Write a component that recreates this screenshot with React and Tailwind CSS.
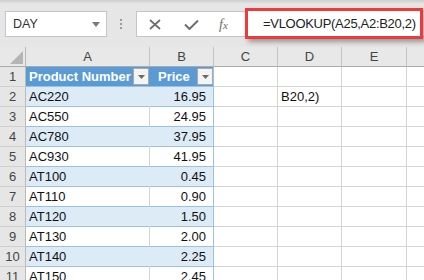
import React from "react";

const rows = [
  ["AC220", "16.95"],
  ["AC550", "24.95"],
  ["AC780", "37.95"],
  ["AC930", "41.95"],
  ["AT100", "0.45"],
  ["AT110", "0.90"],
  ["AT120", "1.50"],
  ["AT130", "2.00"],
  ["AT140", "2.25"],
  ["AT150", "2.45"],
];

const font = "font-['Liberation_Sans',Arial,sans-serif]";

function FilterButton() {
  return (
    <div className="flex h-[17px] w-[16px] shrink-0 items-center justify-center border border-[#a9a9a9] bg-[#f4f4f4]">
      <svg width="7" height="4" viewBox="0 0 7 4">
        <polygon points="0,0 7,0 3.5,4" fill="#6b6b6b" />
      </svg>
    </div>
  );
}

function RowHead({ n }) {
  return (
    <div className="flex h-[20px] w-[26px] shrink-0 items-center justify-center border-r border-b border-r-[#b9b9b9] border-b-[#cfcfcf] bg-[#e6e6e6] text-[13px] text-[#444]">
      {n}
    </div>
  );
}

function EmptyCells({ d }) {
  return (
    <>
      <div className="h-[20px] w-[64px] shrink-0 border-r border-b border-[#d4d4d4] bg-white" />
      <div className="flex h-[20px] w-[64px] shrink-0 items-center border-r border-b border-[#d4d4d4] bg-white pl-[3px] text-[13px] text-[#111]">
        {d}
      </div>
      <div className="h-[20px] w-[65px] shrink-0 border-r border-b border-[#d4d4d4] bg-white" />
      <div className="h-[20px] flex-1 border-b border-[#d4d4d4] bg-white" />
    </>
  );
}

export default function App() {
  return (
    <div className={`relative h-[280px] w-[424px] overflow-hidden bg-white ${font}`}>
      {/* formula bar */}
      <div className="relative h-[47px] bg-[#e6e6e6]">
        <div className="h-[4px] bg-gradient-to-b from-[#cdcdcd] to-[#e6e6e6]" />
        <div className="flex items-start pl-[5px] pt-[7px]">
          <div className="flex h-[26px] w-[102px] shrink-0 items-center justify-between border border-[#c6c6c6] bg-white pl-[7px] pr-[6px]">
            <span className="text-[12.5px] text-[#333]">DAY</span>
            <svg width="8" height="5" viewBox="0 0 8 5">
              <polygon points="0,0 8,0 4,5" fill="#7a7a7a" />
            </svg>
          </div>
          <div className="ml-[13px] flex w-[2px] flex-col gap-[2px] pt-[8px]">
            <span className="h-[2px] w-[2px] bg-[#9c9c9c]" />
            <span className="h-[2px] w-[2px] bg-[#9c9c9c]" />
            <span className="h-[2px] w-[2px] bg-[#9c9c9c]" />
          </div>
          <div className="ml-[14px] -mr-[4px] flex h-[26px] flex-1 items-center border border-[#c6c6c6] bg-white">
            <svg className="ml-[12px]" width="12" height="11" viewBox="0 0 12 11">
              <path d="M1 1 L11 10 M11 1 L1 10" stroke="#6e6e6e" strokeWidth="1.7" />
            </svg>
            <svg className="ml-[23px]" width="15" height="11" viewBox="0 0 15 11">
              <path d="M1 5.5 L5.5 10 L14 1.5" stroke="#6e6e6e" strokeWidth="2" fill="none" />
            </svg>
            <span className="ml-[20px] font-['Liberation_Serif',serif] text-[14px] italic text-[#6e6e6e]">
              f<span className="text-[11px]">x</span>
            </span>
          </div>
        </div>
        {/* highlighted formula */}
        <div className="absolute left-[245px] top-[8px] flex h-[31px] w-[178px] items-center border-[3px] border-[#ee3a3c] bg-white pl-[15px] shadow-[3px_3px_5px_rgba(0,0,0,0.35)]">
          <span className="text-[13px] tracking-[-0.3px] text-[#222]">=VLOOKUP(A25,A2:B20,2)</span>
        </div>
      </div>

      {/* column headers */}
      <div className="flex h-[20px] bg-[#e8e8e8] text-[13px] text-[#444]">
        <div className="relative h-[20px] w-[26px] shrink-0 border-r border-b border-r-[#b9b9b9] border-b-[#ababab]">
          <svg className="absolute left-[10px] top-[4px]" width="13" height="13" viewBox="0 0 13 13">
            <polygon points="13,0 13,13 0,13" fill="#b5b5b5" />
          </svg>
        </div>
        <div className="flex h-[20px] w-[124px] shrink-0 items-center justify-center border-r border-b border-r-[#c4c4c4] border-b-[#ababab]">A</div>
        <div className="flex h-[20px] w-[64px] shrink-0 items-center justify-center border-r border-b border-r-[#c4c4c4] border-b-[#ababab]">B</div>
        <div className="flex h-[20px] w-[64px] shrink-0 items-center justify-center border-r border-b border-r-[#c4c4c4] border-b-[#ababab]">C</div>
        <div className="flex h-[20px] w-[64px] shrink-0 items-center justify-center border-r border-b border-r-[#c4c4c4] border-b-[#ababab]">D</div>
        <div className="flex h-[20px] w-[65px] shrink-0 items-center justify-center border-r border-b border-r-[#c4c4c4] border-b-[#ababab]">E</div>
        <div className="h-[20px] flex-1 border-b border-b-[#ababab]" />
      </div>

      {/* table header row */}
      <div className="flex">
        <RowHead n={1} />
        <div className="flex h-[20px] w-[124px] shrink-0 items-center justify-between border-r border-b border-r-[#5b9bd5] border-b-[#9bc2e6] bg-[#5b9bd5] pl-[3px] text-[13px] font-bold text-white">
          <span>Product Number</span>
          <FilterButton />
        </div>
        <div className="flex h-[20px] w-[64px] shrink-0 items-center justify-between border-r border-b border-r-[#9bc2e6] border-b-[#9bc2e6] bg-[#5b9bd5] pl-[8px] text-[13px] font-bold text-white">
          <span>Price</span>
          <FilterButton />
        </div>
        <EmptyCells />
      </div>

      {rows.map(([code, price], i) => {
        const band = i % 2 === 0;
        return (
          <div key={code} className="flex">
            <RowHead n={i + 2} />
            <div
              className={`flex h-[20px] w-[124px] shrink-0 items-center border-r border-b border-b-[#9bc2e6] pl-[3px] text-[13px] text-[#111] ${
                band ? "border-r-[#ddebf7] bg-[#ddebf7]" : "border-r-[#d4d4d4] bg-white"
              }`}
            >
              {code}
            </div>
            <div
              className={`flex h-[20px] w-[64px] shrink-0 items-center justify-end border-r border-b border-r-[#9bc2e6] border-b-[#9bc2e6] pr-[7px] text-[13px] text-[#111] ${
                band ? "bg-[#ddebf7]" : "bg-white"
              }`}
            >
              {price}
            </div>
            <EmptyCells d={i === 0 ? "B20,2)" : null} />
          </div>
        );
      })}
    </div>
  );
}
